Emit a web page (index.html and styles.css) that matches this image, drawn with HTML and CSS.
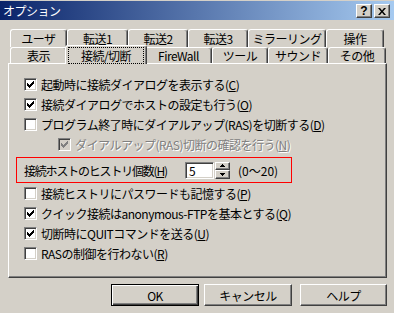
FILE: index.html
```html
<!DOCTYPE html>
<html lang="ja">
<head>
  <meta charset="UTF-8">
  <title>オプション</title>
  <link rel="stylesheet" href="styles.css">
</head>
<body>
  <div class="title-bar">
    <div class="title">オプション</div>
    <div class="caption-btn help">?</div>
    <div class="caption-btn">
      <svg width="8" height="7" viewBox="0 0 8 7"><path d="M0 0h2l2 2.5L6 0h2L5 3.5 8 7H6L4 4.5 2 7H0l3-3.5z" fill="#000"/></svg>
    </div>
  </div>

  <div class="tabs">
    <div class="tab-row back">
      <div class="tab w-user">ユーザ</div>
      <div class="tab w-t1">転送1</div>
      <div class="tab w-t2">転送2</div>
      <div class="tab w-t3">転送3</div>
      <div class="tab w-mirror">ミラーリング</div>
      <div class="tab w-op">操作</div>
    </div>
    <div class="tab-row front">
      <div class="tab w-disp">表示</div>
      <div class="tab active w-conn"><span class="focus">接続/切断</span></div>
      <div class="tab w-fw">FireWall</div>
      <div class="tab w-tool">ツール</div>
      <div class="tab w-sound">サウンド</div>
      <div class="tab w-other">その他</div>
    </div>
  </div>

  <div class="panel">
    <div class="check-row">
      <span class="check"><svg viewBox="1 1 11 11"><path d="M3 5h1v1h1v1h1V6h1V5h1V4h1V3h1v3H9v1H8v1H7v1H6v1H5V9H4V8H3z"/></svg></span>
      <span>起動時に接続ダイアログを表示する(<u>C</u>)</span>
    </div>
    <div class="check-row">
      <span class="check"><svg viewBox="1 1 11 11"><path d="M3 5h1v1h1v1h1V6h1V5h1V4h1V3h1v3H9v1H8v1H7v1H6v1H5V9H4V8H3z"/></svg></span>
      <span>接続ダイアログでホストの設定も行う(<u>O</u>)</span>
    </div>
    <div class="check-row">
      <span class="check"></span>
      <span>プログラム終了時にダイアルアップ(RAS)を切断する(<u>D</u>)</span>
    </div>
    <div class="check-row sub disabled">
      <span class="check"><svg viewBox="1 1 11 11"><path d="M3 5h1v1h1v1h1V6h1V5h1V4h1V3h1v3H9v1H8v1H7v1H6v1H5V9H4V8H3z"/></svg></span>
      <span>ダイアルアップ(RAS)切断の確認を行う(<u>N</u>)</span>
    </div>

    <div class="history-row">
      <span class="history-label">接続ホストのヒストリ個数(<u>H</u>)</span>
      <span class="num-box">5</span>
      <span class="spin">
        <span class="spin-btn"><svg width="5" height="3" viewBox="0 0 5 3"><path d="M2 0h1v1h1v1h1v1H0V2h1V1h1z"/></svg></span>
        <span class="spin-btn"><svg width="5" height="3" viewBox="0 0 5 3"><path d="M0 0h5v1H4v1H3v1H2V2H1V1H0z"/></svg></span>
      </span>
      <span class="range">(0～20)</span>
    </div>

    <div class="check-row">
      <span class="check"></span>
      <span>接続ヒストリにパスワードも記憶する(<u>P</u>)</span>
    </div>
    <div class="check-row">
      <span class="check"><svg viewBox="1 1 11 11"><path d="M3 5h1v1h1v1h1V6h1V5h1V4h1V3h1v3H9v1H8v1H7v1H6v1H5V9H4V8H3z"/></svg></span>
      <span>クイック接続はanonymous-FTPを基本とする(<u>Q</u>)</span>
    </div>
    <div class="check-row">
      <span class="check"><svg viewBox="1 1 11 11"><path d="M3 5h1v1h1v1h1V6h1V5h1V4h1V3h1v3H9v1H8v1H7v1H6v1H5V9H4V8H3z"/></svg></span>
      <span>切断時にQUITコマンドを送る(<u>U</u>)</span>
    </div>
    <div class="check-row">
      <span class="check"></span>
      <span>RASの制御を行わない(<u>R</u>)</span>
    </div>
  </div>

  <div class="dialog-buttons">
    <div class="btn default">OK</div>
    <div class="btn cancel">キャンセル</div>
    <div class="btn help-btn">ヘルプ</div>
  </div>
</body>
</html>
```

FILE: styles.css
```css
* {
  box-sizing: border-box;
}

body {
  margin: 0;
  padding-top: 1px;
  width: 394px;
  height: 313px;
  overflow: hidden;
  background-color: #d4d0c8;
  color: #000;
  font-family: "Noto Sans CJK JP", sans-serif;
  font-size: 12px;
  letter-spacing: -0.5px;
}

u {
  text-decoration: underline;
  text-underline-offset: 1px;
}

/* title bar */

.title-bar {
  height: 19px;
  background: linear-gradient(to right, #0a246a, #a6caf0);
  color: white;
  display: flex;
  align-items: center;
  padding: 0 4px 0 3px;
}

.title-bar .title {
  flex: 1;
  line-height: 19px;
}

.caption-btn {
  width: 16px;
  height: 14px;
  margin-left: 2px;
  margin-top: 1px;
  background-color: #d4d0c8;
  border: 1px solid;
  border-color: #fff #404040 #404040 #fff;
  box-shadow: inset -1px -1px #808080;
  display: flex;
  align-items: center;
  justify-content: center;
  color: #000;
}

.caption-btn.help {
  font-family: "Liberation Sans", sans-serif;
  font-weight: bold;
  font-size: 12px;
  line-height: 12px;
  letter-spacing: 0;
}

/* tabs */

.tabs {
  margin: 9px 0 0 10px;
}

.tab-row {
  display: flex;
}

.tab-row.back {
  height: 18px;
}

.tab-row.front {
  height: 16px;
}

.tab {
  border: 1px solid;
  border-bottom: none;
  border-color: #fff #404040 #fff #fff;
  border-radius: 3px 3px 0 0;
  box-shadow: inset -1px 0 #808080;
  display: flex;
  justify-content: center;
  align-items: center;
  line-height: 14px;
  background-color: #d4d0c8;
}

.tab.active {
  position: relative;
  z-index: 1;
  height: 19px;
  margin: -2px -2px 0;
  align-self: flex-start;
  padding: 2px 3px 1px;
}

.tab .focus {
  flex: 1;
  height: 100%;
  outline: 1px dotted #000;
  display: flex;
  justify-content: center;
  align-items: center;
}

.w-user { width: 57px; }
.w-t1 { width: 61px; }
.w-t2 { width: 60px; }
.w-t3 { width: 60px; }
.w-mirror { width: 78px; }
.w-op { width: 58px; }
.w-disp { width: 57px; }
.w-conn { width: 82px; }
.w-fw { width: 67px; }
.w-tool { width: 56px; }
.w-sound { width: 60px; }
.w-other { width: 58px; }

/* panel */

.panel {
  width: 379px;
  height: 215px;
  margin-left: 8px;
  border: 1px solid;
  border-color: #fff #404040 #404040 #fff;
  box-shadow: inset -1px -1px #808080;
  padding: 10px 0 0 15px;
}

.check-row {
  display: flex;
  align-items: center;
  gap: 4px;
  height: 20px;
  white-space: nowrap;
}

.check-row.sub {
  padding-left: 34px;
}

.check {
  width: 13px;
  height: 13px;
  flex-shrink: 0;
  background-color: #fff;
  border: 1px solid;
  border-color: #808080 #fff #fff #808080;
  box-shadow: inset 1px 1px #404040, inset -1px -1px #d4d0c8;
}

.check svg {
  display: block;
  width: 11px;
  height: 11px;
  fill: #000;
  shape-rendering: crispEdges;
}

.disabled {
  color: #808080;
  text-shadow: 1px 1px 0 #fff;
}

.disabled .check {
  background-color: #d4d0c8;
}

.disabled .check svg {
  fill: #808080;
}

.history-row {
  display: flex;
  align-items: center;
  width: 276px;
  height: 26px;
  margin: 3px 0 0 -8px;
  padding-left: 7px;
  border: 1px solid #ff0000;
  white-space: nowrap;
}

.history-label {
  flex: 1;
  min-width: 0;
  letter-spacing: -1.2px;
}

.num-box {
  flex: none;
  width: 29px;
  height: 17px;
  background-color: #fff;
  border: 1px solid;
  border-color: #808080 #fff #fff #808080;
  box-shadow: inset 1px 1px #404040, inset -1px -1px #d4d0c8;
  padding-left: 3px;
  display: flex;
  align-items: center;
}

.spin {
  flex: none;
  width: 15px;
  height: 17px;
  margin-left: 1px;
  display: flex;
  flex-direction: column;
}

.spin-btn {
  flex: 1;
  border: 1px solid;
  border-color: #fff #404040 #404040 #fff;
  box-shadow: inset -1px -1px #808080;
  display: flex;
  align-items: center;
  justify-content: center;
}

.spin-btn svg {
  fill: #000;
  shape-rendering: crispEdges;
}

.range {
  flex: none;
  width: 61px;
  padding-left: 8px;
  letter-spacing: 0;
}

/* bottom buttons */

.dialog-buttons {
  display: flex;
  margin: 6px 0 0 111px;
}

.btn {
  width: 88px;
  height: 22px;
  border: 1px solid;
  border-color: #fff #404040 #404040 #fff;
  box-shadow: inset -1px -1px #808080;
  display: flex;
  align-items: center;
  justify-content: center;
}

.btn.default {
  border-color: #000;
  box-shadow: inset 1px 1px #fff, inset -1px -1px #404040, inset -2px -2px #808080;
}

.btn.cancel {
  margin-left: 5px;
}

.btn.help-btn {
  width: 87px;
  margin-left: 8px;
}
```
